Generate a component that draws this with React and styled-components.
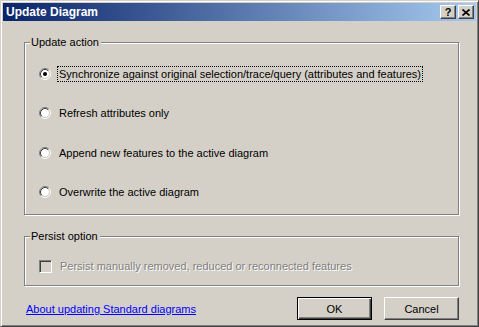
import React from "react";
import styled, { createGlobalStyle } from "styled-components";

const GlobalStyle = createGlobalStyle`
  html, body {
    margin: 0;
    padding: 0;
    background: #d4d0c8;
  }
  body {
    font-family: "Liberation Sans", Arial, sans-serif;
    font-size: 11px;
    color: #000;
  }
`;

const Window = styled.div`
  width: 479px;
  height: 327px;
  box-sizing: border-box;
  background: #d4d0c8;
  border: 1px solid;
  border-color: #d4d0c8 #404040 #404040 #d4d0c8;
  box-shadow: inset 1px 1px 0 #fff, inset -1px -1px 0 #808080;
  padding: 2px;
  display: flex;
  flex-direction: column;
`;

const TitleBar = styled.div`
  height: 18px;
  display: flex;
  align-items: center;
  justify-content: space-between;
  padding: 0 2px 0 3px;
  background: linear-gradient(to right, #0a246a, #a6caf0);
`;

const Title = styled.span`
  color: #fff;
  font-weight: bold;
  font-size: 12px;
  line-height: 18px;
`;

const TitleButtons = styled.div`
  display: flex;
  gap: 2px;
`;

const CaptionButton = styled.div`
  width: 16px;
  height: 14px;
  box-sizing: border-box;
  background: #d4d0c8;
  border: 1px solid;
  border-color: #fff #404040 #404040 #fff;
  box-shadow: inset -1px -1px 0 #808080;
  display: flex;
  align-items: center;
  justify-content: center;
  font-weight: bold;
  font-size: 11px;
  line-height: 12px;
`;

const Content = styled.div`
  flex: 1;
  display: flex;
  flex-direction: column;
  padding: 21px 17px 0 21px;
`;

const Group = styled.div`
  position: relative;
  box-sizing: border-box;
  height: ${(p) => p.$height}px;
  margin-top: ${(p) => p.$top || 0}px;
  border: 1px solid #808080;
  box-shadow: 1px 1px 0 #fff, inset 1px 1px 0 #fff;
  padding: ${(p) => p.$padTop}px 0 0 14px;
  display: flex;
  flex-direction: column;
  gap: 23.34px;
`;

const Legend = styled.span`
  position: absolute;
  top: -8px;
  left: 5px;
  padding: 0 2px 0 1px;
  line-height: 14px;
  background: #d4d0c8;
`;

const OptionRow = styled.div`
  display: flex;
  align-items: center;
  height: 16px;
`;

const RadioLabel = styled.span`
  margin-left: 6px;
  padding: 0 1px;
  line-height: 14px;
  border: 1px dotted ${(p) => (p.$focused ? "#000" : "transparent")};
`;

const CheckBox = styled.span`
  width: 13px;
  height: 13px;
  box-sizing: border-box;
  border: 1px solid;
  border-color: #808080 #fff #fff #808080;
  box-shadow: inset 1px 1px 0 #404040, inset -1px -1px 0 #d4d0c8;
  background: #d4d0c8;
`;

const DisabledText = styled.span`
  margin-left: 8px;
  color: #808080;
  text-shadow: 1px 1px 0 #fff;
  line-height: 14px;
`;

const Footer = styled.div`
  margin-top: 11px;
  display: flex;
  align-items: center;
  justify-content: space-between;
  padding-left: 2px;
`;

const HelpLink = styled.a`
  color: #0000ff;
  text-decoration: underline;
  cursor: pointer;
`;

const Buttons = styled.div`
  display: flex;
  gap: 12px;
`;

const Button = styled.button`
  width: 75px;
  height: 23px;
  box-sizing: border-box;
  padding: 0;
  font-family: "Liberation Sans", Arial, sans-serif;
  font-size: 11px;
  color: #000;
  background: #d4d0c8;
  border: 1px solid;
  border-color: ${(p) => (p.$default ? "#000" : "#fff #404040 #404040 #fff")};
  box-shadow: ${(p) =>
    p.$default
      ? "inset 1px 1px 0 #fff, inset -1px -1px 0 #404040, inset -2px -2px 0 #808080"
      : "inset -1px -1px 0 #808080"};
`;

const Radio = ({ checked }) => (
  <svg width="12" height="12" viewBox="0 0 12 12" style={{ flex: "none" }}>
    <circle cx="6" cy="6" r="4" fill="#fff" />
    <path d="M2.11 9.89 A5.5 5.5 0 0 1 9.89 2.11" fill="none" stroke="#808080" />
    <path d="M9.89 2.11 A5.5 5.5 0 0 1 2.11 9.89" fill="none" stroke="#fff" />
    <path d="M2.82 9.18 A4.5 4.5 0 0 1 9.18 2.82" fill="none" stroke="#404040" />
    <path d="M9.18 2.82 A4.5 4.5 0 0 1 2.82 9.18" fill="none" stroke="#d4d0c8" />
    {checked && <circle cx="6" cy="6" r="2" fill="#000" />}
  </svg>
);

const options = [
  "Synchronize against original selection/trace/query (attributes and features)",
  "Refresh attributes only",
  "Append new features to the active diagram",
  "Overwrite the active diagram",
];

const App = () => {
  return (
    <>
      <GlobalStyle />
      <Window>
        <TitleBar>
          <Title>Update Diagram</Title>
          <TitleButtons>
            <CaptionButton>?</CaptionButton>
            <CaptionButton>
              <svg width="8" height="7" viewBox="0 0 8 7">
                <path d="M0.5 0.5 L7.5 6.5 M7.5 0.5 L0.5 6.5" stroke="#000" strokeWidth="1.6" />
              </svg>
            </CaptionButton>
          </TitleButtons>
        </TitleBar>
        <Content>
          <Group $height={173} $padTop={23}>
            <Legend>Update action</Legend>
            {options.map((opt, index) => (
              <OptionRow key={index}>
                <Radio checked={index === 0} />
                <RadioLabel $focused={index === 0}>{opt}</RadioLabel>
              </OptionRow>
            ))}
          </Group>
          <Group $height={50} $top={21} $padTop={21}>
            <Legend>Persist option</Legend>
            <OptionRow>
              <CheckBox />
              <DisabledText>
                Persist manually removed, reduced or reconnected features
              </DisabledText>
            </OptionRow>
          </Group>
          <Footer>
            <HelpLink>About updating Standard diagrams</HelpLink>
            <Buttons>
              <Button $default>OK</Button>
              <Button>Cancel</Button>
            </Buttons>
          </Footer>
        </Content>
      </Window>
    </>
  );
};

export default App;
